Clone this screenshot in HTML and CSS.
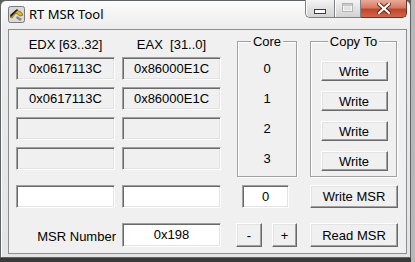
FILE: index.html
```html
<!DOCTYPE html>
<html lang="en">

<head>
    <meta charset="UTF-8">
    <meta name="viewport" content="width=device-width, initial-scale=1.0">
    <title>RT MSR Tool</title>
    <link rel="stylesheet" href="styles.css">
</head>

<body>
    <div class="window">
        <div class="titlebar">
            <svg class="app-icon" width="17" height="17" viewBox="0 0 17 17">
                <rect x="0.5" y="0.5" width="16" height="16" rx="2" fill="#d9d9d9" stroke="#7a7a7a"/>
                <path d="M2 11 L8 4 L13 6 L15 9 L12 10 L8 7 L4 12 Z" fill="#e8b817" stroke="#5a4600" stroke-width="0.6"/>
                <path d="M2 9 L9 3 L10 4 L3 11 Z" fill="#1a1a1a"/>
                <path d="M9 10 L14 13 L12 15 L8 12 Z" fill="#8a8a8a"/>
            </svg>
            <span class="title">RT MSR Tool</span>
            <div class="caption-buttons">
                <div class="cap-btn cap-min"><span class="glyph-min"></span></div>
                <div class="cap-btn cap-max"><span class="glyph-max"></span></div>
                <div class="cap-btn cap-close">
                    <svg width="14" height="11" viewBox="0 0 14 11">
                        <path d="M2 1 L12 10 M12 1 L2 10" stroke="#5a2416" stroke-width="4" stroke-linecap="square"/>
                        <path d="M2 1 L12 10 M12 1 L2 10" stroke="#ffffff" stroke-width="2.2" stroke-linecap="square"/>
                    </svg>
                </div>
            </div>
        </div>

        <div class="client">
            <div class="grid top">
                <div class="col-head c-edx">EDX [63..32]</div>
                <div class="col-head c-eax">EAX  [31..0]</div>

                <fieldset class="group core-group"><legend>Core</legend></fieldset>
                <fieldset class="group copy-group"><legend>Copy To</legend></fieldset>

                <!-- row 0 -->
                <div class="field readonly c-edx r1">0x0617113C</div>
                <div class="field readonly c-eax r1">0x86000E1C</div>
                <div class="core-num r1">0</div>
                <div class="btn write-btn r1">Write</div>

                <!-- row 1 -->
                <div class="field readonly c-edx r2">0x0617113C</div>
                <div class="field readonly c-eax r2">0x86000E1C</div>
                <div class="core-num r2">1</div>
                <div class="btn write-btn r2">Write</div>

                <!-- row 2 -->
                <div class="field readonly c-edx r3"></div>
                <div class="field readonly c-eax r3"></div>
                <div class="core-num r3">2</div>
                <div class="btn write-btn r3">Write</div>

                <!-- row 3 -->
                <div class="field readonly c-edx r4"></div>
                <div class="field readonly c-eax r4"></div>
                <div class="core-num r4">3</div>
                <div class="btn write-btn r4">Write</div>
            </div>

            <div class="grid bottom">
                <div class="field c-edx"></div>
                <div class="field c-eax"></div>
                <div class="field core-input">0</div>
                <div class="btn wide-btn">Write MSR</div>

                <div class="msr-label c-edx">MSR Number</div>
                <div class="field c-eax">0x198</div>
                <div class="step-buttons">
                    <div class="btn step-btn minus">-</div>
                    <div class="btn step-btn plus">+</div>
                </div>
                <div class="btn wide-btn tall">Read MSR</div>
            </div>
        </div>
    </div>
</body>

</html>
```

FILE: styles.css
```css
body {
    margin: 0;
    background: linear-gradient(90deg, #5e5e5e 411px, #b8b8b8 411px);
    font-family: "Liberation Sans", Arial, sans-serif;
    height: 262px;
    overflow: hidden;
}

.window {
    width: 411px;
    height: 258px;
    box-sizing: border-box;
    border: 1px solid #5f6366;
    border-radius: 6px 6px 0 0;
    padding: 0 3px 3px 7px;
    background: linear-gradient(#fcfcfc, #ececec 28px, #e4e4e4);
    box-shadow: inset 1px 1px #ffffff, 0 4px 0 #3a3a3a;
}

.titlebar {
    height: 28px;
    display: flex;
    align-items: flex-start;
}

.app-icon {
    margin-top: 5px;
    flex: none;
}

.title {
    margin-left: 4px;
    margin-top: 4px;
    font-family: "Noto Sans", "Open Sans", sans-serif;
    font-size: 13px;
    line-height: 18px;
    color: #000;
}

.caption-buttons {
    margin-left: auto;
    margin-top: -1px;
    display: flex;
}

.cap-btn {
    height: 18px;
    box-sizing: border-box;
    border: 1px solid #7d8084;
    border-top: none;
    display: flex;
    justify-content: center;
    align-items: center;
}

.cap-min {
    width: 29px;
    border-radius: 0 0 0 5px;
    border-right: none;
    background: linear-gradient(#f4f4f4, #e2e2e2 50%, #d2d2d2);
    box-shadow: inset 1px 0 #fff;
}

.cap-max {
    width: 27px;
    background: linear-gradient(#f4f4f4, #e2e2e2 50%, #d2d2d2);
    box-shadow: inset 1px 0 #fff;
}

.cap-close {
    width: 46px;
    border-left: none;
    border-color: #6e3427;
    border-radius: 0 0 5px 0;
    background: linear-gradient(#e9ab99, #d67a62 45%, #c34429 55%, #d0654a);
}

.glyph-min {
    width: 10px;
    height: 3px;
    margin-top: 6px;
    background: #fff;
    border: 1px solid #3c3c3c;
}

.glyph-max {
    width: 9px;
    height: 7px;
    margin-bottom: 2px;
    border: 1px solid #b4b4b4;
    box-shadow: inset 0 2px #c8c8c8, inset 0 0 0 1px #f4f4f4;
}

.client {
    height: 225px;
    box-sizing: border-box;
    border: 1px solid #8c8e90;
    background-color: #f0f0f0;
    padding-left: 7px;
    font-size: 13px;
    color: #000;
}

.grid {
    display: grid;
    grid-template-columns: [edx-start] 99px [edx-end] 7px [eax-start] 99px [eax-end] 15px [core-start] 62px [core-end] 12px [copy-start] 88px [copy-end];
}

.top {
    grid-template-rows: 20px repeat(4, 23px);
    row-gap: 7px;
}

.bottom {
    margin-top: 15px;
    grid-template-rows: 23px 24px;
    row-gap: 15px;
}

.c-edx {
    grid-column: edx;
}

.c-eax {
    grid-column: eax;
}

.r1 { grid-row: 2; }
.r2 { grid-row: 3; }
.r3 { grid-row: 4; }
.r4 { grid-row: 5; }

.col-head {
    grid-row: 1;
    padding-top: 7px;
    line-height: 15px;
    text-align: center;
    white-space: pre;
}

.group {
    grid-row: 1 / -1;
    margin: 4px 1px -7px 1px;
    padding: 0;
    min-width: 0;
    border: 1px solid #a0a0a0;
    box-shadow: inset 1px 1px #ffffff, 1px 1px #ffffff;
}

.group legend {
    margin: 0 auto;
    padding: 0 2px;
    line-height: 15px;
    background-color: #f0f0f0;
}

.core-group {
    grid-column: core;
}

.copy-group {
    grid-column: copy;
    margin-right: 1px;
    margin-left: 0;
}

.field {
    box-sizing: border-box;
    background-color: #ffffff;
    border: 1px solid;
    border-color: #a0a0a0 #ffffff #ffffff #a0a0a0;
    box-shadow: inset 1px 1px #696969, inset -1px -1px #e3e3e3;
    display: flex;
    justify-content: center;
    align-items: center;
    padding-bottom: 1px;
}

.field.readonly {
    background-color: #f0f0f0;
}

.core-num {
    grid-column: core;
    display: flex;
    justify-content: center;
    align-items: center;
}

.btn {
    box-sizing: border-box;
    background-color: #f0f0f0;
    border: 1px solid;
    border-color: #ffffff #696969 #696969 #ffffff;
    box-shadow: inset -1px -1px #a0a0a0, inset 1px 1px #e3e3e3;
    display: flex;
    justify-content: center;
    align-items: center;
}

.write-btn {
    grid-column: copy;
    justify-self: center;
    width: 67px;
    height: 20px;
    margin-top: 4px;
}

.core-input {
    grid-column: core;
    justify-self: center;
    width: 47px;
    margin-right: 3px;
}

.wide-btn {
    grid-column: copy;
}

.msr-label {
    display: flex;
    justify-content: flex-end;
    align-items: center;
    padding-top: 3px;
    margin-right: -1px;
}

.step-buttons {
    grid-column: core;
    display: flex;
    justify-content: space-between;
    margin-right: 1px;
}

.step-btn {
    width: 26px;
}

.plus {
    width: 25px;
}
```
